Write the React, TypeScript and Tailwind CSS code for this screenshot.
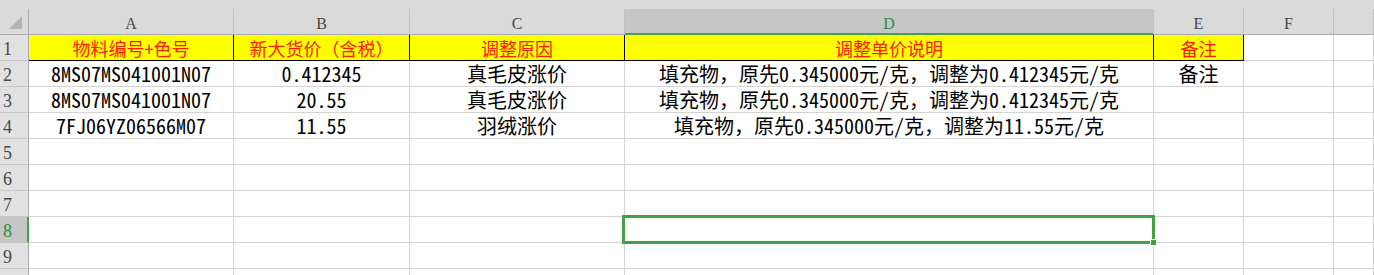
import React from 'react';

const cellFont = { fontFamily: '"Noto Sans Mono CJK SC", "Noto Sans CJK SC", sans-serif' };
const headFont = { fontFamily: '"Liberation Serif", serif' };

const columns = ['A', 'B', 'C', 'D', 'E', 'F', ''];

const rows: string[][] = [
  ['物料编号+色号', '新大货价（含税）', '调整原因', '调整单价说明', '备注', '', ''],
  ['8MS07MS041001N07', '0.412345', '真毛皮涨价', '填充物，原先0.345000元/克，调整为0.412345元/克', '备注', '', ''],
  ['8MS07MS041001N07', '20.55', '真毛皮涨价', '填充物，原先0.345000元/克，调整为0.412345元/克', '', '', ''],
  ['7FJ06YZ06566M07', '11.55', '羽绒涨价', '填充物，原先0.345000元/克，调整为11.55元/克', '', '', ''],
  ['', '', '', '', '', '', ''],
  ['', '', '', '', '', '', ''],
  ['', '', '', '', '', '', ''],
  ['', '', '', '', '', '', ''],
  ['', '', '', '', '', '', ''],
  ['', '', '', '', '', '', ''],
];

function ColHead({ label }: { label: string }) {
  const active = label === 'D';
  return (
    <div
      className={`h-[26px] flex justify-center items-start pt-[7px] border-r border-[#c2c2c2] ${
        active ? 'bg-[#c6c6c6] border-b-2 border-b-[#43a047] text-[#2e8b3e]' : 'bg-[#dadada] border-b border-b-[#ababab] text-[#474747]'
      }`}
    >
      <span className="text-[16px] leading-none" style={headFont}>{label}</span>
    </div>
  );
}

function RowHead({ n }: { n: number }) {
  const active = n === 8;
  return (
    <div
      className={`h-[26px] flex items-start pt-[5px] pl-[3px] overflow-hidden border-b border-b-[#c9c9c9] ${
        active ? 'bg-[#c6c6c6] border-r-2 border-r-[#43a047] text-[#2e8b3e]' : 'bg-[#e1e1e1] border-r border-r-[#ababab] text-[#474747]'
      }`}
    >
      {n < 10 && <span className="text-[18px] leading-none" style={headFont}>{n}</span>}
    </div>
  );
}

function Cell({ text, row, col }: { text: string; row: number; col: number }) {
  const header = row === 0 && col < 5;
  const selected = row === 7 && col === 3;
  return (
    <div
      className={`relative h-[26px] flex items-center justify-center whitespace-nowrap border-r border-b ${
        header ? 'bg-[#ffff00] border-black text-[#ff1a00]' : 'bg-white border-[#d4d4d4] text-black'
      }`}
    >
      {text && (
        <span className={`leading-none ${header ? 'text-[18px]' : 'text-[20px]'}`} style={cellFont}>
          {text}
        </span>
      )}
      {selected && (
        <>
          <div className="absolute z-10 top-[-2px] left-[-3px] w-[533px] h-[29px] border-[3px] border-[#43a047]" />
          <div className="absolute z-20 top-[22px] left-[525px] w-[7px] h-[7px] bg-[#43a047] border border-white" />
        </>
      )}
    </div>
  );
}

export default function App() {
  return (
    <div className="w-[1374px] h-[275px] overflow-hidden bg-white select-none">
      <div className="h-[9px] bg-[#dadada]" />
      <div className="grid grid-cols-[29px_205px_176px_215px_529px_90px_90px_1fr]">
        <div className="h-[26px] bg-[#dadada] border-r border-b border-[#ababab] flex items-end justify-end pr-[6px] pb-[5px]">
          <svg width="13" height="13" viewBox="0 0 13 13">
            <polygon points="13,0 13,13 0,13" fill="#b4b4b4" />
          </svg>
        </div>
        {columns.map((c, i) => (
          <ColHead key={i} label={c} />
        ))}
        {rows.map((r, ri) => (
          <React.Fragment key={ri}>
            <RowHead n={ri + 1} />
            {r.map((t, ci) => (
              <Cell key={ci} text={t} row={ri} col={ci} />
            ))}
          </React.Fragment>
        ))}
      </div>
    </div>
  );
}
